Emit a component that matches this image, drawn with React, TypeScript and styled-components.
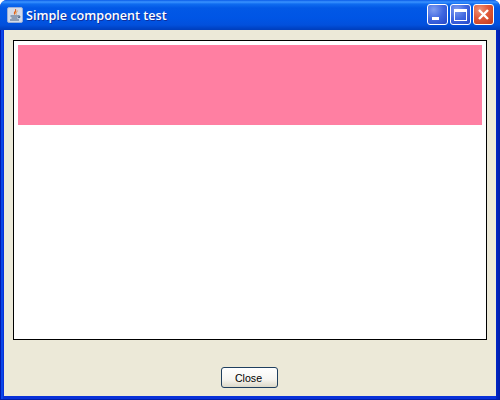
import React from "react";
import styled, { createGlobalStyle } from "styled-components";

const Global = createGlobalStyle`
  html, body { margin: 0; padding: 0; width: 500px; height: 400px; overflow: hidden; background: #fff; }
`;

const Frame = styled.div`
  width: 500px;
  height: 400px;
  box-sizing: border-box;
  display: flex;
  flex-direction: column;
  border-radius: 7px 7px 0 0;
  border-bottom: 1px solid #001ea8;
  overflow: hidden;
  background: linear-gradient(90deg, #0019b0 0, #0019b0 1px, #0a46e8 1px, #0a46e8 3px, #0831d9 3px, #0831d9 496px, #0026c8 496px, #001ea8 500px);
`;

const TitleBar = styled.div`
  height: 30px;
  flex: none;
  display: flex;
  align-items: center;
  padding: 0 6px 0 7px;
  gap: 3px;
  background: linear-gradient(180deg, #0a5be8 0, #3a93ff 2px, #0f6cf0 4px, #0258e6 8px, #0055e5 18px, #0250dc 25px, #0044c8 28px, #003dbb 30px);
`;

const Title = styled.div`
  flex: 1;
  font-family: "Open Sans", "Noto Sans", sans-serif;
  font-size: 12.6px;
  font-weight: 600;
  color: #fff;
  text-shadow: 1px 1px 0 #0f2f9c;
  white-space: nowrap;
`;

const Controls = styled.div`
  display: flex;
  gap: 2px;
  margin-top: -1px;
`;

const Ctl = styled.div<{ $red?: boolean }>`
  width: 21px;
  height: 21px;
  box-sizing: border-box;
  border: 1px solid #fff;
  border-radius: 3px;
  display: flex;
  background: ${(p) =>
    p.$red
      ? "radial-gradient(circle at 30% 25%, #ee9478 0, #e0593a 45%, #c23a1c 100%)"
      : "radial-gradient(circle at 30% 25%, #7f9df0 0, #3f66e0 50%, #2447c8 100%)"};
`;

const Body = styled.div`
  flex: 1;
  min-height: 0;
  margin: 0 4px 3px;
  background: #ece9d8;
  display: flex;
  flex-direction: column;
  padding: 10px 9px 8px;
`;

const Panel = styled.div`
  height: 300px;
  box-sizing: border-box;
  flex: none;
  border: 1px solid #000;
  background: #fff;
  padding: 4px;
`;

const Pink = styled.div`
  height: 80px;
  background: #ff7fa2;
`;

const Footer = styled.div`
  flex: 1;
  display: flex;
  justify-content: center;
  align-items: flex-end;
  padding-right: 1px;
`;

const CloseButton = styled.button`
  width: 57px;
  height: 21px;
  box-sizing: border-box;
  padding: 0 2px 0 0;
  border: 1px solid #1f3f5f;
  border-radius: 3px;
  background: linear-gradient(180deg, #fff 0, #f6f5f0 60%, #dcd8c8 100%);
  font-family: "Liberation Sans", "Noto Sans", sans-serif;
  font-size: 10.6px;
  color: #000;
`;

const JavaIcon = () => (
  <svg width="16" height="16" viewBox="0 0 16 16" style={{ flex: "none" }}>
    <rect x="0.5" y="0.5" width="15" height="15" rx="1.5" fill="#d5dbe8" stroke="#9aaed8" />
    <path d="M8 2c1 2-2 3-1 5 .4 1 1 1 1 1-1-2 2-3 1-6z" fill="#e0601a" />
    <path d="M10.5 4c-1.2 1-2.4 2-1.2 3.5" stroke="#e8801a" fill="none" />
    <path d="M3.5 9h8M4.5 11h6M3 13h9" stroke="#4a6080" strokeWidth="1" />
    <path d="M11 9h1.8v1.6H11" stroke="#4a6080" fill="none" />
  </svg>
);

export default function App() {
  return (
    <>
      <Global />
      <Frame>
        <TitleBar>
          <JavaIcon />
          <Title>Simple component test</Title>
          <Controls>
            <Ctl>
              <svg width="19" height="19" viewBox="0 0 19 19">
                <rect x="4" y="12" width="7" height="3" fill="#fff" />
              </svg>
            </Ctl>
            <Ctl>
              <svg width="19" height="19" viewBox="0 0 19 19">
                <rect x="3.5" y="4.5" width="12" height="11" fill="none" stroke="#fff" />
                <rect x="3" y="4" width="13" height="3" fill="#fff" />
              </svg>
            </Ctl>
            <Ctl $red>
              <svg width="19" height="19" viewBox="0 0 19 19">
                <path d="M5 5l9 9M14 5l-9 9" stroke="#fff" strokeWidth="2.4" />
              </svg>
            </Ctl>
          </Controls>
        </TitleBar>
        <Body>
          <Panel>
            <Pink />
          </Panel>
          <Footer>
            <CloseButton>Close</CloseButton>
          </Footer>
        </Body>
      </Frame>
    </>
  );
}
